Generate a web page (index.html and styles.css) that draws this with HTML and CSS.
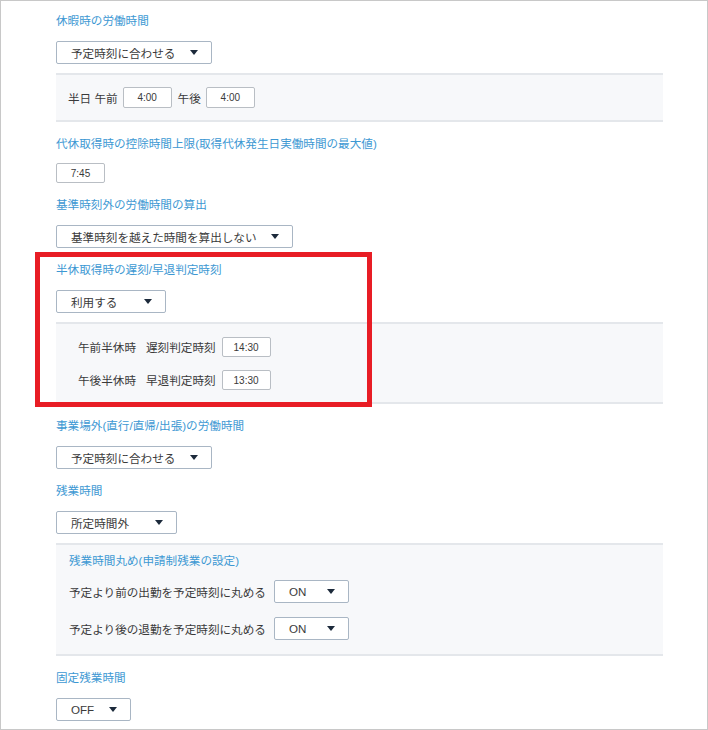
FILE: index.html
```html
<!DOCTYPE html>
<html lang="ja">

<head>
    <meta charset="UTF-8">
    <title>勤務設定</title>
    <link rel="stylesheet" href="styles.css">
</head>

<body>
    <div class="frame">
        <div class="settings">
            <div class="field">
                <div class="field-title">休暇時の労働時間</div>
                <div class="select select-wide"><span>予定時刻に合わせる</span><i class="caret"></i></div>
                <div class="sub-panel half-day">
                    <span>半日 午前</span>
                    <span class="time-input">4:00</span>
                    <span>午後</span>
                    <span class="time-input">4:00</span>
                </div>
            </div>

            <div class="field">
                <div class="field-title tight">代休取得時の控除時間上限(取得代休発生日実働時間の最大値)</div>
                <span class="time-input">7:45</span>
            </div>

            <div class="field">
                <div class="field-title">基準時刻外の労働時間の算出</div>
                <div class="select select-xwide"><span>基準時刻を越えた時間を算出しない</span><i class="caret"></i></div>
            </div>

            <div class="field">
                <div class="field-title">半休取得時の遅刻/早退判定時刻</div>
                <div class="select select-short"><span>利用する</span><i class="caret"></i></div>
                <div class="sub-panel judge">
                    <div class="judge-row">
                        <span class="judge-kind">午前半休時</span>
                        <span class="judge-label">遅刻判定時刻</span>
                        <span class="time-input">14:30</span>
                    </div>
                    <div class="judge-row">
                        <span class="judge-kind">午後半休時</span>
                        <span class="judge-label">早退判定時刻</span>
                        <span class="time-input">13:30</span>
                    </div>
                </div>
            </div>

            <div class="field">
                <div class="field-title">事業場外(直行/直帰/出張)の労働時間</div>
                <div class="select select-wide"><span>予定時刻に合わせる</span><i class="caret"></i></div>
            </div>

            <div class="field">
                <div class="field-title">残業時間</div>
                <div class="select select-mid"><span>所定時間外</span><i class="caret"></i></div>
                <div class="sub-panel rounding">
                    <div class="field-title">残業時間丸め(申請制残業の設定)</div>
                    <div class="rounding-row">
                        <span>予定より前の出勤を予定時刻に丸める</span>
                        <div class="select select-toggle"><span>ON</span><i class="caret"></i></div>
                    </div>
                    <div class="rounding-row">
                        <span>予定より後の退勤を予定時刻に丸める</span>
                        <div class="select select-toggle"><span>ON</span><i class="caret"></i></div>
                    </div>
                </div>
            </div>

            <div class="field">
                <div class="field-title">固定残業時間</div>
                <div class="select select-toggle"><span>OFF</span><i class="caret"></i></div>
            </div>
        </div>

        <div class="highlight"></div>
    </div>
</body>

</html>
```

FILE: styles.css
```css
html,
body {
    margin: 0;
    padding: 0;
    background-color: #fff;
}

body {
    font-family: "Liberation Sans", "Noto Sans CJK JP", sans-serif;
    font-size: 11.6px;
    color: #3a3a3a;
}

.frame {
    position: relative;
    width: 708px;
    height: 730px;
    box-sizing: border-box;
    border: 1px solid #c8c8c8;
    overflow: hidden;
}

.settings {
    padding: 11px 44px 0 55px;
}

.field + .field {
    margin-top: 13px;
}

.field-title {
    color: #3d98d3;
    line-height: 18px;
    margin-bottom: 11px;
    white-space: nowrap;
}

.field-title.tight {
    margin-bottom: 10px;
}

/* select boxes */
.select {
    display: flex;
    align-items: center;
    justify-content: space-between;
    height: 23px;
    box-sizing: border-box;
    padding: 0 13px 0 14px;
    border: 1px solid #a9b6c4;
    border-radius: 2px;
    background-color: #fff;
    color: #3a3a3a;
}

.select-wide {
    width: 156px;
}

.select-xwide {
    width: 237px;
}

.select-short {
    width: 110px;
}

.select-mid {
    width: 121px;
}

.select-toggle {
    width: 75px;
}

.caret {
    width: 0;
    height: 0;
    border-left: 4px solid transparent;
    border-right: 4px solid transparent;
    border-top: 5px solid #1c2a3b;
}

.time-input {
    display: inline-flex;
    align-items: center;
    justify-content: center;
    width: 49px;
    height: 20px;
    box-sizing: border-box;
    border: 1px solid #b9bec4;
    border-radius: 2px;
    background-color: #fff;
    font-size: 10px;
    color: #3a3a3a;
}

/* grey sub panels */
.sub-panel {
    margin-top: 9px;
    background-color: #f7f8fa;
    border-top: 2px solid #e4e7eb;
    border-bottom: 2px solid #e4e7eb;
}

.half-day {
    display: flex;
    align-items: center;
    gap: 5px;
    padding: 12px 12px;
}

.half-day .time-input {
    height: 21px;
}

.half-day .time-input + span {
    margin-left: 1px;
}

.judge {
    display: flex;
    flex-direction: column;
    gap: 13px;
    padding: 13px 22px 12px;
}

.judge-row {
    display: flex;
    align-items: center;
}

.judge-kind {
    width: 68px;
}

.judge-label {
    margin-right: 6px;
}

.rounding {
    padding: 7px 13px 14px;
}

.rounding .field-title {
    margin-bottom: 10px;
}

.rounding-row {
    display: flex;
    align-items: center;
    gap: 8px;
}

.rounding-row + .rounding-row {
    margin-top: 14px;
}

.highlight {
    position: absolute;
    left: 34px;
    top: 251px;
    width: 337px;
    height: 155px;
    box-sizing: border-box;
    border: 5px solid #e81d25;
}
```
